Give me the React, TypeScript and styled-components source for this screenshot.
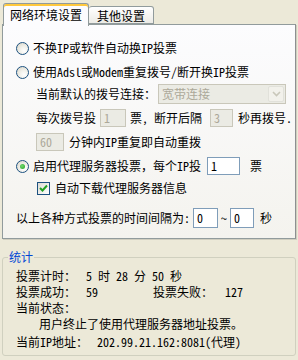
import React from "react";
import styled, { createGlobalStyle } from "styled-components";

const FONT = `"Noto Sans Mono CJK SC", "Noto Sans CJK SC", "DejaVu Sans", sans-serif`;

const Global = createGlobalStyle`
  html, body { margin: 0; padding: 0; background: #ECE9D8; }
  body { font-family: ${FONT}; font-size: 12px; color: #000; }
  * { box-sizing: border-box; }
`;

const Window = styled.div`
  width: 298px;
  height: 360px;
  background: #ECE9D8;
  padding-top: 3px;
  display: flex;
  flex-direction: column;
  font-family: ${FONT};
  font-size: 12px;
  line-height: 12px;
`;

const TabStrip = styled.div`
  display: flex;
  align-items: flex-end;
  padding-left: 3px;
  height: 21px;
  position: relative;
  z-index: 2;
`;

const Tab = styled.div<{ $active?: boolean }>`
  display: flex;
  align-items: center;
  justify-content: center;
  height: ${(p) => (p.$active ? "23px" : "18px")};
  margin-bottom: ${(p) => (p.$active ? "-2px" : "0")};
  padding: 0 ${(p) => (p.$active ? "6px" : "8px")};
  border: 1px solid #919B9C;
  border-bottom: ${(p) => (p.$active ? "none" : "1px solid #919B9C")};
  border-left: ${(p) => (p.$active ? "1px solid #919B9C" : "none")};
  border-radius: 3px 3px 0 0;
  background: ${(p) =>
    p.$active ? "#FCFCFE" : "linear-gradient(#FFFFFF, #ECEBE6)"};
  box-shadow: ${(p) => (p.$active ? "inset 0 2px 0 #FFC83C" : "none")};
  padding-top: ${(p) => (p.$active ? "0" : "1px")};
  white-space: nowrap;
`;

const Panel = styled.div`
  margin: 0 2px 0 2px;
  height: 215px;
  border: 1px solid #919B9C;
  border-right-color: #8C9091;
  background: linear-gradient(#FCFCFE, #F4F3EE);
  box-shadow: 1px 1px 0 #D0CEBF;
  padding-left: 13px;
  display: flex;
  flex-direction: column;
`;

const Row = styled.div<{ $mt: number; $indent?: number }>`
  display: flex;
  align-items: center;
  height: 20px;
  margin-top: ${(p) => p.$mt}px;
  padding-left: ${(p) => p.$indent ?? 0}px;
  white-space: nowrap;
`;

const Text = styled.span<{ $ml?: number; $mr?: number }>`
  margin-left: ${(p) => p.$ml ?? 0}px;
  margin-right: ${(p) => p.$mr ?? 0}px;
`;

const RadioCircle = styled.span<{ $checked?: boolean }>`
  width: 13px;
  height: 13px;
  border-radius: 50%;
  border: 1px solid #1C5180;
  background: radial-gradient(circle at 65% 70%, #FFFFFF 0%, #F2F1EB 40%, #D6D3C5 100%);
  margin-right: 4px;
  display: flex;
  align-items: center;
  justify-content: center;
  flex: none;
  &::after {
    content: "";
    display: ${(p) => (p.$checked ? "block" : "none")};
    width: 5px;
    height: 5px;
    border-radius: 50%;
    background: radial-gradient(circle at 40% 40%, #73D86F, #21A121);
  }
`;

const CheckBox = styled.span`
  width: 13px;
  height: 13px;
  border: 1px solid #1C5180;
  background: linear-gradient(135deg, #DCDBD3, #FFFFFF);
  margin-right: 5px;
  display: flex;
  align-items: center;
  justify-content: center;
  flex: none;
`;

const Box = styled.div<{ $w: number; $disabled?: boolean; $h?: number }>`
  width: ${(p) => p.$w}px;
  height: ${(p) => p.$h ?? 18}px;
  border: 1px solid ${(p) => (p.$disabled ? "#C9C7BA" : "#7F9DB9")};
  background: ${(p) => (p.$disabled ? "#EBEBE4" : "#FFFFFF")};
  color: ${(p) => (p.$disabled ? "#ACA899" : "#000")};
  padding-left: 3px;
  display: flex;
  align-items: center;
  flex: none;
`;

const Combo = styled.div`
  width: 128px;
  height: 20px;
  margin-left: auto;
  margin-right: 9px;
  border: 1px solid #C9C7BA;
  background: #EBEBE4;
  color: #ACA899;
  display: flex;
  align-items: center;
  padding-left: 3px;
`;

const ComboButton = styled.span`
  margin-left: auto;
  width: 16px;
  height: 16px;
  margin-right: 1px;
  border: 1px solid #E1E1DA;
  border-radius: 2px;
  background: #F2F1EB;
  display: flex;
  align-items: center;
  justify-content: center;
`;

const Group = styled.fieldset`
  margin: 12px 2px 0 2px;
  padding: 0 0 0 5px;
  height: 105px;
  border: 1px solid #D0D0BF;
  border-radius: 3px;
  min-width: 0;
`;

const Legend = styled.legend`
  color: #0046D5;
  padding: 0 1px;
  line-height: 12px;
`;

const StatRow = styled.div<{ $mt?: number; $indent?: number }>`
  display: flex;
  align-items: center;
  height: 16px;
  margin-top: ${(p) => p.$mt ?? 0}px;
  padding-left: ${(p) => 8 + (p.$indent ?? 0)}px;
  white-space: nowrap;
`;

const Cell = styled.span<{ $w?: number }>`
  display: inline-block;
  width: ${(p) => (p.$w ? `${p.$w}px` : "auto")};
  white-space: pre;
`;

const Check = () => (
  <svg width="9" height="9" viewBox="0 0 9 9">
    <path d="M1 4 L3.5 6.5 L8 1.5" stroke="#21A121" strokeWidth="2" fill="none" />
  </svg>
);

const Chevron = () => (
  <svg width="9" height="6" viewBox="0 0 9 6">
    <path d="M1 1 L4.5 4.5 L8 1" stroke="#C9C7BA" strokeWidth="1.6" fill="none" />
  </svg>
);

export default function App() {
  return (
    <Window>
      <Global />
      <TabStrip>
        <Tab $active>网络环境设置</Tab>
        <Tab>其他设置</Tab>
      </TabStrip>
      <Panel>
        <Row $mt={13}>
          <RadioCircle />
          <Text>不换IP或软件自动换IP投票</Text>
        </Row>
        <Row $mt={4}>
          <RadioCircle />
          <Text>使用Adsl或Modem重复拨号/断开换IP投票</Text>
        </Row>
        <Row $mt={2} $indent={20}>
          <Text>当前默认的拨号连接：</Text>
          <Combo>
            宽带连接
            <ComboButton>
              <Chevron />
            </ComboButton>
          </Combo>
        </Row>
        <Row $mt={4} $indent={20}>
          <Text $mr={4}>每次拨号投</Text>
          <Box $w={26} $disabled>1</Box>
          <Text $ml={4} $mr={8}>票, 断开后隔</Text>
          <Box $w={23} $disabled>3</Box>
          <Text $ml={5}>秒再拨号.</Text>
        </Row>
        <Row $mt={4} $indent={20}>
          <Box $w={28} $disabled>60</Box>
          <Text $ml={5}>分钟内IP重复即自动重拨</Text>
        </Row>
        <Row $mt={4}>
          <RadioCircle $checked />
          <Text $mr={6}>启用代理服务器投票，每个IP投</Text>
          <Box $w={33}>1</Box>
          <Text $ml={10}>票</Text>
        </Row>
        <Row $mt={2} $indent={21}>
          <CheckBox>
            <Check />
          </CheckBox>
          <Text>自动下载代理服务器信息</Text>
        </Row>
        <Row $mt={10}>
          <Text $mr={3}>以上各种方式投票的时间间隔为:</Text>
          <Box $w={25} $h={20}>0</Box>
          <Text $ml={3} $mr={3}>~</Text>
          <Box $w={24} $h={20}>0</Box>
          <Text $ml={6}>秒</Text>
        </Row>
      </Panel>
      <Group>
        <Legend>统计</Legend>
        <StatRow $mt={5}>
          <Cell $w={70}>投票计时：</Cell>
          <Cell>5 时 28 分 50 秒</Cell>
        </StatRow>
        <StatRow>
          <Cell $w={70}>投票成功：</Cell>
          <Cell $w={67}>59</Cell>
          <Cell $w={72}>投票失败：</Cell>
          <Cell>127</Cell>
        </StatRow>
        <StatRow>
          <Cell>当前状态：</Cell>
        </StatRow>
        <StatRow $indent={23}>
          <Cell>用户终止了使用代理服务器地址投票。</Cell>
        </StatRow>
        <StatRow $mt={2}>
          <Cell $w={81}>当前IP地址：</Cell>
          <Cell>202.99.21.162:8081(代理)</Cell>
        </StatRow>
      </Group>
    </Window>
  );
}
